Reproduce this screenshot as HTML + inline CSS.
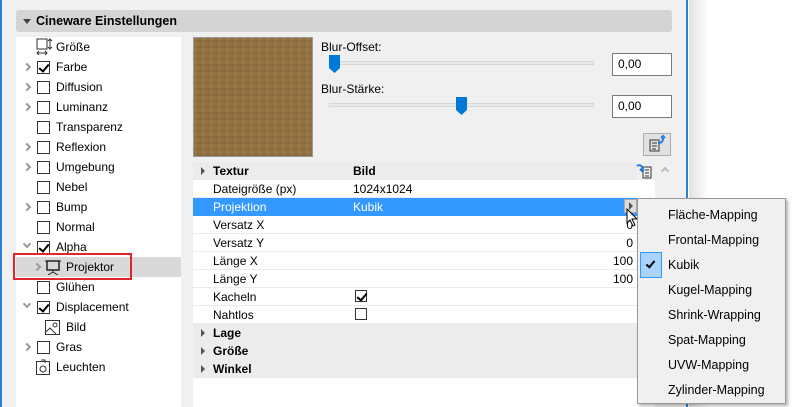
<!DOCTYPE html>
<html><head><meta charset="utf-8"><style>
*{box-sizing:border-box;margin:0;padding:0}
body{width:801px;height:407px;overflow:hidden;background:#fff;font-family:"Liberation Sans",sans-serif;font-size:12px;color:#000;position:relative}
.a{position:absolute}
.win{left:0;top:0;width:688px;height:407px;background:#f0f0f0;border-left:2px solid #2b7fd4;border-right:2px solid #2b7fd4}
.shadow{left:689px;top:0;width:20px;height:407px;background:linear-gradient(90deg,#e2e2e2,#fff)}
.hdr{left:16px;top:10px;width:656px;height:22px;background:#d4d4d4;border-radius:3px;font-weight:bold;line-height:22px;padding-left:20px;font-size:12.5px}
.tri{width:0;height:0;border-left:4px solid transparent;border-right:4px solid transparent;border-top:5px solid #444}
.lp{left:16px;top:37px;width:165px;height:370px;background:#fff}
.row{position:absolute;left:0;width:165px;height:20px;line-height:20px}
.cb{position:absolute;left:21px;top:4px;width:13px;height:13px;border:1px solid #333;background:#fff}
.cb.c::after{content:"";position:absolute;left:3px;top:0px;width:4px;height:8px;border:solid #000;border-width:0 2px 2px 0;transform:rotate(40deg)}
.tx{position:absolute;left:40px}
.chev{position:absolute;left:8px;top:7px;width:6px;height:6px;border:solid #999;border-width:2px 2px 0 0;transform:rotate(45deg)}
.chev.d{transform:rotate(135deg);top:4px}
.grid{left:193px;top:162px;width:462px;height:245px;background:#fff}
.gr{position:absolute;left:0;width:444px;height:18px;line-height:18px;border-bottom:1px solid #ebebeb}
.gr .k{position:absolute;left:20px}.gr .v{position:absolute;left:160px}.gr .n{position:absolute;right:4px}
.sec{background:#ececec;font-weight:bold}
.st{position:absolute;left:8px;top:5px;width:0;height:0;border-top:4px solid transparent;border-bottom:4px solid transparent;border-left:4px solid #555}
.menu{left:637px;top:198px;width:149px;height:206px;background:#f0f0f0;border:1px solid #999;box-shadow:2px 2px 3px rgba(0,0,0,.3)}
.mi{position:absolute;left:30px;font-size:12.5px}
.inp{width:60px;height:23px;background:#fff;border:1px solid #7a7a7a;line-height:21px;padding-left:5px}
.track{left:329px;width:265px;height:4px;background:#e7eaea;border:1px solid #d6d6d6}
.thumb{width:11px;height:18px;background:#0078d7;clip-path:polygon(0 0,100% 0,100% 72%,50% 100%,0 72%)}
</style></head><body>
<div class="a win"></div>
<div class="a shadow"></div>
<div class="a hdr"><div class="a tri" style="left:7px;top:9px"></div>Cineware Einstellungen</div>
<div class="a lp">
<div class="row" style="top:0"><svg class="a" style="left:20px;top:1px" width="17" height="18" viewBox="0 0 17 18"><rect x="1" y="1" width="10" height="10" fill="none" stroke="#333"/><path d="M14 1v10M12 3l2-2 2 2M12 9l2 2 2-2M1 15h10M3 13l-2 2 2 2M9 13l2 2-2 2" stroke="#333" fill="none"/></svg><span class="tx">Größe</span></div>
<div class="row" style="top:20px"><i class="chev"></i><i class="cb c"></i><span class="tx">Farbe</span></div>
<div class="row" style="top:40px"><i class="chev"></i><i class="cb"></i><span class="tx">Diffusion</span></div>
<div class="row" style="top:60px"><i class="chev"></i><i class="cb"></i><span class="tx">Luminanz</span></div>
<div class="row" style="top:80px"><i class="cb"></i><span class="tx">Transparenz</span></div>
<div class="row" style="top:100px"><i class="chev"></i><i class="cb"></i><span class="tx">Reflexion</span></div>
<div class="row" style="top:120px"><i class="chev"></i><i class="cb"></i><span class="tx">Umgebung</span></div>
<div class="row" style="top:140px"><i class="cb"></i><span class="tx">Nebel</span></div>
<div class="row" style="top:160px"><i class="chev"></i><i class="cb"></i><span class="tx">Bump</span></div>
<div class="row" style="top:180px"><i class="cb"></i><span class="tx">Normal</span></div>
<div class="row" style="top:200px"><i class="chev d"></i><i class="cb c"></i><span class="tx">Alpha</span></div>
<div class="row" style="top:220px;background:#d9d9d9"><i class="chev" style="left:18px"></i><svg class="a" style="left:29px;top:3px" width="16" height="15" viewBox="0 0 16 15"><rect x="2" y="1" width="12" height="9" fill="none" stroke="#222" stroke-width="1.5"/><path d="M0 1h16M8 10v2M8 12l-5 3M8 12l5 3" stroke="#222"/></svg><span class="tx" style="left:50px">Projektor</span></div>
<div class="row" style="top:240px"><i class="cb"></i><span class="tx">Glühen</span></div>
<div class="row" style="top:260px"><i class="chev d"></i><i class="cb c"></i><span class="tx">Displacement</span></div>
<div class="row" style="top:280px"><svg class="a" style="left:29px;top:3px" width="15" height="15" viewBox="0 0 15 15"><rect x="0.5" y="0.5" width="14" height="14" fill="none" stroke="#333"/><circle cx="10" cy="5" r="2" fill="none" stroke="#333"/><path d="M1 12l4-4 6 6" fill="none" stroke="#333"/></svg><span class="tx" style="left:50px">Bild</span></div>
<div class="row" style="top:300px"><i class="chev"></i><i class="cb"></i><span class="tx">Gras</span></div>
<div class="row" style="top:320px"><svg class="a" style="left:20px;top:2px" width="14" height="16" viewBox="0 0 14 16"><rect x="0.5" y="2.5" width="13" height="13" fill="none" stroke="#333"/><path d="M5 1h4v3" fill="none" stroke="#333"/><circle cx="7" cy="10" r="3" fill="none" stroke="#333"/></svg><span class="tx">Leuchten</span></div>
</div>
<div class="a" style="left:13px;top:253px;width:119px;height:27px;border:2px solid #e0262a"></div>
<div class="a" style="left:193px;top:37px;width:120px;height:120px;border:1px solid #999;background:#92703f;background-image:repeating-linear-gradient(0deg,rgba(0,0,0,.06) 0 2px,transparent 2px 6px),repeating-linear-gradient(90deg,rgba(255,255,255,.05) 0 3px,transparent 3px 8px)"></div>
<div class="a" style="left:321px;top:40px">Blur-Offset:</div>
<div class="a track" style="top:61px"></div><div class="a thumb" style="left:329px;top:55px"></div>
<div class="a inp" style="left:612px;top:53px">0,00</div>
<div class="a" style="left:321px;top:82px">Blur-Stärke:</div>
<div class="a track" style="top:103px"></div><div class="a thumb" style="left:456px;top:97px"></div>
<div class="a inp" style="left:612px;top:95px">0,00</div>
<div class="a" style="left:643px;top:133px;width:28px;height:23px;background:#e1e1e1;border:1px solid #adadad"><svg width="26" height="21" viewBox="0 0 26 21"><rect x="6" y="6" width="9" height="11" fill="none" stroke="#333"/><path d="M8 9h5M8 12h5M8 15h4" stroke="#333"/><path d="M14 9c3 0 5-1 5-5M17 4l2-2 2 2" stroke="#1f7ae0" stroke-width="2" fill="none"/></svg></div>
<div class="a grid">
<div class="gr sec" style="top:0"><i class="st"></i><span class="k">Textur</span><span class="v">Bild</span></div>
<div class="gr" style="top:18px"><span class="k">Dateigröße (px)</span><span class="v">1024x1024</span></div>
<div class="gr" style="top:36px;background:#3399ff;color:#fff;border-color:#3399ff"><span class="k">Projektion</span><span class="v">Kubik</span></div>
<div class="gr" style="top:54px"><span class="k">Versatz X</span><span class="n">0</span></div>
<div class="gr" style="top:72px"><span class="k">Versatz Y</span><span class="n">0</span></div>
<div class="gr" style="top:90px"><span class="k">Länge X</span><span class="n">100</span></div>
<div class="gr" style="top:108px"><span class="k">Länge Y</span><span class="n">100</span></div>
<div class="gr" style="top:126px"><span class="k">Kacheln</span><i class="cb c" style="left:162px;top:2px;width:12px;height:12px"></i></div>
<div class="gr" style="top:144px"><span class="k">Nahtlos</span><i class="cb" style="left:162px;top:2px;width:12px;height:12px"></i></div>
<div class="gr sec" style="top:162px"><i class="st"></i><span class="k">Lage</span></div>
<div class="gr sec" style="top:180px"><i class="st"></i><span class="k">Größe</span></div>
<div class="gr sec" style="top:198px"><i class="st"></i><span class="k">Winkel</span></div>
<div class="a" style="left:444px;top:0;width:18px;height:18px;background:#f0f0f0"></div>
<svg class="a" style="left:443px;top:1px" width="16" height="17" viewBox="0 0 16 17"><rect x="7" y="4" width="8" height="11" fill="none" stroke="#333"/><path d="M9 7h4M9 10h4M9 13h4" stroke="#333"/><path d="M1 3c3-2 6 0 5 4M4 6l2 2 2-2" stroke="#1f7ae0" stroke-width="2" fill="none"/></svg>
<div class="a" style="left:431px;top:37px;width:13px;height:14px;background:#ddd;border:1px solid #aaa"><i class="st" style="left:4px;top:2px"></i></div>
</div>
<div class="a" style="left:662px;top:168px;width:6px;height:6px;border:solid #bbb;border-width:2px 0 0 2px;transform:rotate(45deg)"></div>
<svg class="a" style="left:626px;top:208px" width="14" height="20" viewBox="0 0 14 20"><path d="M1 1v14l3-3 3 6 2-1-3-6h5z" fill="#fff" stroke="#000"/></svg>
<div class="a menu">
<div class="a" style="left:2px;top:53px;width:22px;height:26px;background:#aad4ff;border:1px solid #3399ff"></div>
<div class="a" style="left:10px;top:60px;width:5px;height:9px;border:solid #000;border-width:0 2px 2px 0;transform:rotate(40deg)"></div>
<span class="mi" style="top:9px">Fläche-Mapping</span>
<span class="mi" style="top:34px">Frontal-Mapping</span>
<span class="mi" style="top:59px">Kubik</span>
<span class="mi" style="top:84px">Kugel-Mapping</span>
<span class="mi" style="top:109px">Shrink-Wrapping</span>
<span class="mi" style="top:134px">Spat-Mapping</span>
<span class="mi" style="top:159px">UVW-Mapping</span>
<span class="mi" style="top:184px">Zylinder-Mapping</span>
</div>
</body></html>
